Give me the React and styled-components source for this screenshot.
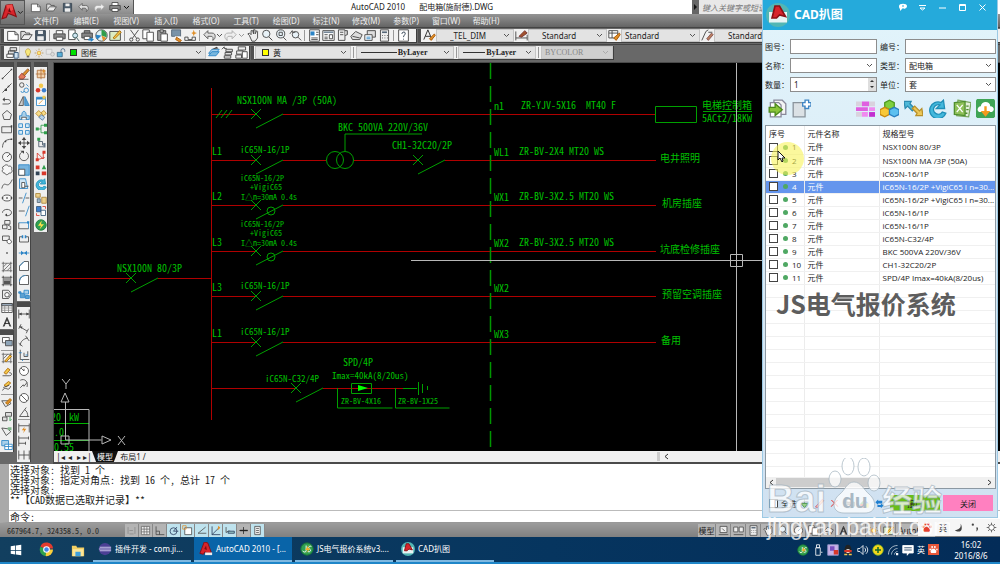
import React, { useState } from 'react';
import styled, { createGlobalStyle } from 'styled-components';

const GlobalStyle = createGlobalStyle`
  * {
    box-sizing: border-box;
  }
  body {
    margin: 0;
    font-family: 'Noto Sans', 'Noto Sans CJK SC', sans-serif;
    font-size: 8px;
    color: #222;
  }
  button,
  input,
  select {
    font: inherit;
    color: inherit;
    margin: 0;
    padding: 0;
    border: 0;
    border-radius: 0;
    background: none;
  }
`;

/* ---------- icons ---------- */

const K = '#444';
const B = '#2b84c6';
const L = '#a9d0ea';
const O = '#e0902a';
const G = '#2f9e4b';
const R = '#d8372a';
const Y = '#f3c84b';
const N = 'none';

// every shape is [path, stroke, fill]
const icons = {
  new: [['M2 3h9l4 4v7H2z', K, '#fff'], ['M11 3v4h4', K, N]],
  open: [['M1 13V3h5l1 2h5v2', K, '#ddd'], ['M1 13l4-6h10l-4 6z', K, '#eee']],
  save: [['M2 2h12v12H2z', '#33404d', '#4c5c6b'], ['M5 2h6v4H5zM4 9h8v5H4z', N, '#eee']],
  undo: [['M1 7l5-5v3h5c3 0 4 2 4 4s-1 4-3 5c1-3 0-5-2-5H6v3z', '#555', '#ddd']],
  redo: [['M15 7l-5-5v3H5C2 5 1 7 1 9s1 4 3 5c-1-3 0-5 2-5h4v3z', '#aaa', '#eee']],
  print: [['M4 6V2h8v4', K, '#fff'], ['M1 6h14v6H1z', K, '#888'], ['M4 10h8v4H4z', K, '#fff']],
  preview: [['M2 1h8v12H2z', K, '#fff'], ['M7 8a3 3 0 1 0 6 0a3 3 0 1 0-6 0M12 11l3 4', '#355', '#cfe6f2']],
  publish: [['M4 5V2h7v3M1 5h13v6H1z', K, '#888'], ['M4 9h7v4H4z', K, '#fff'], ['M9 12h3v-2l4 3-4 3v-2H9z', N, B]],
  globe: [['M8 1a7 7 0 1 0 0 14a7 7 0 1 0 0-14', K, '#dff0f5'], ['M8 8V1a7 7 0 0 1 6 9z', N, G], ['M8 8L3 13a7 7 0 0 1-2-6z', N, B], ['M8 8l6 3-4 4z', N, O]],
  sheet: [['M1 3h13v11H1z', K, '#dcecc2'], ['M5 11l8-9 2 2-8 8z', '#a60', Y]],
  cut: [['M3 1l8 11M13 1L5 12', K, N], ['M2 13a2 2 0 1 0 4 0a2 2 0 1 0-4 0M10 13a2 2 0 1 0 4 0a2 2 0 1 0-4 0', K, N]],
  copy: [['M1 1h8v11H1z', K, '#fff'], ['M6 4h8v11H6z', K, '#fff']],
  paste: [['M2 2h10v12H2z', K, '#999'], ['M6 6h8v9H6z', K, '#fff'], ['M5 1h4v3H5z', K, '#ccc']],
  match: [['M2 1h11v8H2z', '#567', '#7a93a8'], ['M6 9h7v2H6z', N, '#fff'], ['M8 10l6 4-2 2-5-3z', '#a50', O]],
  blockEdit: [['M1 14v-4h4v3h5v-3h4v4z', K, N], ['M9 5l2-1 1-3 1 3 3 1-3 1-1 3-1-3z', N, O]],
  pan: [['M3 8l-2-2 2-1 2 2V2l2 0 1 4 0-5 2 0v5l2-4 1 1v8l-3 4H6z', K, '#eee']],
  zoom: [['M2 6a4 4 0 1 0 9 0a4 4 0 1 0-9 0', K, '#e8f2f8'], ['M10 10l4 4', '#333', N]],
  zoomWin: [['M2 6a5 5 0 1 0 10 0a5 5 0 1 0-10 0M10 10l4 4', K, '#e8f2f8'], ['M5 4h4v4H5z', K, N]],
  zoomPrev: [['M4 7a4 4 0 1 0 8 0a4 4 0 1 0-8 0M11 10l4 4', K, '#e8f2f8'], ['M1 6l3-4v2h4', K, N]],
  props: [['M2 1h12v14H2z', K, '#fff'], ['M3 3h5v5H3z', N, B], ['M10 4h3M10 7h3M4 11h8M4 13h8', K, N]],
  center: [['M1 2h14v12H1z', K, '#fff'], ['M2 3h12v2H2z', N, '#789'], ['M3 7h4M3 10h4M3 12h4M9 7h4v5H9z', K, N]],
  palette: [['M3 1h8v13H3z', K, '#eee'], ['M5 4h4M5 7h4', K, N], ['M11 2h3v5l-3 1', K, '#ccc']],
  setMgr: [['M1 9l6-6 8 4-3 6H3z', K, '#ddd'], ['M3 9l9 2', K, N]],
  markup: [['M4 2h10v8H4z', K, '#ddd'], ['M1 7h9v7H1z', K, '#fff'], ['M3 10h5M3 12h5', B, N]],
  calc: [['M3 1h10v14H3z', K, '#eee'], ['M5 3h6v2H5z', N, '#567'], ['M5 8h1M8 8h1M11 8h1M5 11h1M8 11h1M11 11h1', K, N]],
  help: [['M2 1h12v14H2z', K, '#fff'], ['M6 6c0-3 5-3 4 0c0 1-2 2-2 4M8 12v1', '#234', N]],
  textStyle: [['M1 13L6 1l5 12M3 9h6', '#222', N], ['M8 12l6-6 1 2-5 6z', '#a50', O]],
  dimStyle: [['M1 3v11M15 7v7M1 11h14', K, N], ['M5 9l7-7 3 3-7 5z', '#733', '#a0522d']],
  tableStyle: [['M1 2h11v9H1zM1 5h11M5 2v9', K, '#fff'], ['M7 11l7-6 1 2-5 7z', '#a50', O]],
  leader: [['M1 14L6 3l3-2M9 4h5', K, N], ['M7 12l6-7 2 2-6 7z', '#855', '#b97f5f']],
  layers: [['M5 2h8v4H5zM3 6h8v4H3z', K, '#ddd'], ['M1 10h8v4H1z', K, '#fff'], ['M10 8h5v7h-5z', '#357', '#cfe2f0']],
  layerCur: [['M2 9l4-5h9l-4 5z', B, L], ['M2 12l4-5h9l-4 5z', B, '#78b6dd'], ['M6 4l6-3 2 2z', N, K]],
  layerPrev: [['M6 4h8v3H6zM5 8h8v3H5zM4 12h8v3H4z', K, '#ddd'], ['M1 4l3-3v2h3', K, N]],
  layerState: [['M4 1h9v4H4zM2 6h8v4H2zM1 11h7v4H1z', K, '#eee'], ['M9 7h6v8H9z', K, '#fff']],
  bulb: [['M8 1a5 5 0 0 0-3 8l1 3h4l1-3a5 5 0 0 0-3-8z', '#b89a3a', '#f8e87c'], ['M6 13h4v2H6z', N, '#555']],
  sun: [['M5 8a3 3 0 1 0 6 0a3 3 0 1 0-6 0', O, '#f8e87c'], ['M8 1v2M8 13v2M1 8h2M13 8h2M3 3l1 1M12 12l1 1M3 13l1-1M12 4l1-1', '#a08030', N]],
  freeze: [['M2 2h9v8H2z', '#bbb', '#e8e8e8'], ['M9 10a3 3 0 1 0 6 0a3 3 0 1 0-6 0', '#aaa', '#ddd']],
  lock: [['M2 7h8v7H2z', '#257', '#5ab0d8'], ['M8 7V4a3 3 0 0 1 6 0v2', '#357', N]],
  line: [['M2 14L14 2', K, N], ['M1 13h2v2H1zM13 1h2v2h-2z', N, K]],
  xline: [['M2 14L14 2', K, N], ['M5 9h3v3H5zM9 5h2v2H9z', N, K]],
  pline: [['M2 12h7c5 0 5-6 0-6H4', K, N], ['M2 6l3-3v6z', N, K]],
  polygon: [['M8 2l6 5-2 7H4L2 7z', K, '#eee']],
  rect: [['M1 5h13v8H1z', K, '#eee'], ['M13 3h2v3h-2z', N, K]],
  arc: [['M2 14C2 7 6 3 14 3', K, N], ['M5 5h2v2H5zM13 2h2v2h-2z', N, K]],
  circle: [['M2 8a6 6 0 1 0 12 0a6 6 0 1 0-12 0M8 8l4-4', K, '#f6f6f6']],
  cloud: [['M4 3c2-3 5-2 6 0c4-1 5 2 4 4c2 2 0 6-3 5c-2 3-5 3-6 0c-4 0-4-4-2-5c-2-2-1-4 1-4', K, '#f6f6f6']],
  spline: [['M1 14C5 0 8 18 15 2', K, N]],
  ellipse: [['M2 8a6 4 0 1 0 12 0a6 4 0 1 0-12 0', K, '#f6f6f6'], ['M1 7h2v2H1zM7 7h2v2H7zM13 7h2v2h-2z', N, K]],
  ellArc: [['M2 9c0-6 12-6 12 0c0 3-4 4-6 4', K, N], ['M8 10v4l-3-2z', N, K]],
  insert: [['M5 2h7v5H5zM2 8h6v5H2z', K, '#eee'], ['M9 8l4 2v4H9', K, N]],
  block: [['M2 4h9v6H2z', K, '#eee'], ['M9 9a3 3 0 1 0 5 2L11 8z', K, '#fff']],
  point: [['M7 7h2v2H7z', N, K]],
  hatch: [['M3 1v14M13 1v14M1 3h14M1 13h14M3 8l5-5M3 13L13 3M8 13l5-5', '#666', N]],
  gradient: [['M3 1v14M13 1v14M1 3h14M1 13h14', K, N], ['M4 4h8v8H4z', N, '#999'], ['M4 8h8v4H4z', N, '#555']],
  region: [['M2 3h8l4 5-4 6H2z', K, '#eee'], ['M5 9a3 3 0 1 0 6 0a3 3 0 1 0-6 0', K, '#fff']],
  table: [['M1 2h14v12H1z', K, '#fff'], ['M1 2h14v3H1z', K, '#9ab'], ['M1 8h14M1 11h14M5 5v9M10 5v9', '#888', N]],
  mtext: [['M3 14L8 2l5 12M5 10h6', '#222', N], ['M4 14L8 4l4 10', '#222', N]],
  order: [['M2 2h9v7H2z', K, '#fff'], ['M6 6h9v7H6z', K, '#8fa5b8']],
  editHatch: [['M3 1v14M13 1v14M1 3h14M1 13h14M3 9l6-6', '#666', N], ['M5 12l7-8 2 2-7 7z', '#a60', Y]],
  editPline: [['M2 13h9c5 0 3-5 0-4', K, N], ['M4 9l5-6 3 2-5 6z', '#a60', Y]],
  editSpline: [['M2 14c4-8 8 4 11-6', K, N], ['M4 7l6-5 3 2-6 5z', '#a60', Y], ['M3 10l8-3', K, N]],
  attr: [['M1 5l5 8 7-4-2-4z', K, '#eee'], ['M6 8l6-6 2 2-5 6z', '#a60', O]],
  sync: [['M6 2h8v5H6zM2 8h6v5H2z', K, '#ddd'], ['M12 8v5l2-2', G, N]],
  extract: [['M1 4l6 10 6-5-4-4z', K, '#eee'], ['M9 3h5v4H9z', N, '#7fb68a']],
  dataLink: [['M1 2h9v7H1z', B, L], ['M5 7h10v7H5zM5 10h10M10 7v7', B, '#fff']],
  erase: [['M1 12l4-5 5 4-3 4H3z', '#a33', '#e27a5a'], ['M6 8l7-7 2 2-6 7z', '#853', O], ['M1 15h13', K, N]],
  copyObj: [['M2 4a3 3 0 1 0 6 0a3 3 0 1 0-6 0', K, N], ['M8 11a3 3 0 1 0 6 0a3 3 0 1 0-6 0M4 12a2 2 0 1 0 4 0M11 3l3 3', B, N]],
  mirror: [['M7 2v12H1z', K, '#ccc'], ['M9 2v12h6z', B, '#5d9fcf']],
  offset: [['M2 14V9h3c0-8 6-8 6 0h4v5z', B, L], ['M5 14v-3h6v3', K, '#fff']],
  array: [['M1 1h5v5H1zM10 1h5v5h-5zM1 10h5v5H1zM10 10h5v5h-5z', B, '#d5eaf6']],
  move: [['M8 1v14M1 8h14', K, N], ['M8 0l3 4H5zM8 16l3-4H5zM0 8l4-3v6zM16 8l-4-3v6z', N, K]],
  rotate: [['M5 3a6 6 0 1 0 6 0', K, N], ['M3 1h5v4z', N, K]],
  scale: [['M1 1h14v14H1z', B, '#78b4de'], ['M1 7h8v8H1z', K, '#fff']],
  stretch: [['M2 1h8l3 13H2z', B, '#cfe6f5'], ['M5 6h4v7H5z', K, '#fff'], ['M9 11h5', K, N]],
  trim: [['M1 8h5M10 8h5', K, N], ['M11 1L6 15', B, N]],
  extend: [['M1 8h8', K, N], ['M15 1L10 15', B, N]],
  breakPt: [['M1 5h13v8', B, N], ['M1 5v8h13', K, N], ['M12 3h3v3h-3z', N, B]],
  breakObj: [['M2 12V5h4M10 5h4v7H2', K, N], ['M5 3h2v4H5zM9 3h2v4H9z', N, B]],
  join: [['M1 8h14', B, N], ['M4 5l4 3-4 3zM12 5L8 8l4 3z', N, B]],
  chamfer: [['M2 14V8l6-6h6v12z', K, '#fff'], ['M2 8l6-6', B, N]],
  fillet: [['M2 14V10c0-5 4-8 8-8h4v12z', K, '#fff'], ['M2 10c0-5 4-8 8-8', B, N]],
  explode: [['M3 7h6v6H3z', B, '#5d9fcf'], ['M8 3h6v5H8z', B, L], ['M10 10h5v4h-5zM1 5h3v2H1z', B, '#5d9fcf']],
  dimLin: [['M1 2v12M15 2v12M1 8h14', K, N], ['M1 8l4-2v4zM15 8l-4-2v4z', N, K]],
  dimAlign: [['M2 6l10 6M1 9l3-6M11 15l3-6', K, N], ['M2 6l4 0-1 3z', N, K]],
  dimArc: [['M3 14c0-5 4-9 10-10M1 11l5 4M10 1l5 7', K, N]],
  dimOrd: [['M3 1v13h12M8 5v5h5V3', K, N], ['M1 5h4M6 14v2M10 8h3', B, N]],
  dimRad: [['M2 8a6 6 0 1 0 12 0a6 6 0 1 0-12 0', K, '#fff'], ['M8 8L4 4M8 8V5', K, N]],
  dimJog: [['M3 3c6-3 11 2 9 9M3 13l4-4 1 2 4-5', K, N]],
  dimDia: [['M2 8a6 6 0 1 0 12 0a6 6 0 1 0-12 0M4 4l8 8', K, '#fff']],
  dimAng: [['M11 2L2 14h13M9 5c3 2 4 5 4 9', K, N]],
  dimQuick: [['M1 2v12M15 2v12M1 5h14', K, N], ['M9 6l-4 5h3l-1 4 4-6H8z', N, O]],
  dimBase: [['M1 1v14M1 4h13M1 11h9M14 2v4M10 9v4', K, N]],
  dimCont: [['M1 2v12M8 2v12M15 2v12M1 8h14', K, N]],
  p1: [['M3 3h10v10H3zM8 1v14M1 8h14', '#b0703a', '#f3d4b0'], ['M11 1l1 2 3 1-3 1-1 2-1-2z', N, O]],
  p2: [['M5 5a3 3 0 1 0 6 0a3 3 0 1 0-6 0', N, Y], ['M1 11a3 3 0 1 0 6 0a3 3 0 1 0-6 0', N, R], ['M9 11a3 3 0 1 0 6 0a3 3 0 1 0-6 0', N, '#3b7fd0']],
  p3: [['M2 3h12v11H2z', B, '#fff'], ['M2 3h12v3H2z', N, B], ['M5 12l5-5', O, N], ['M10 1h4v4h-4z', N, Y]],
  p4: [['M1 6l4-4 4 4-4 4zM8 5l4-3 3 4-4 3z', '#b98a2a', '#f7dc8a'], ['M5 11l4-3 4 3-3 4z', '#579', '#b9d4ea']],
  p5: [['M3 8h5M8 3v10M8 3h5M8 13h5', G, N], ['M1 6h4v4H1zM12 1h4v4h-4zM12 11h4v4h-4z', N, G]],
  p6: [['M5 3v10h6M5 6h5v5', '#456', N], ['M3 1h4v4H3z', N, G], ['M11 8h3v6h-3z', N, '#678']],
  p7: [['M3 13V4l8 8V3M3 13l10-3', R, N], ['M1 11h4v4H1zM10 1h4v4h-4z', N, R]],
  p8: [['M1 2h5v5H1z', N, R], ['M9 7l3-6 3 6z', N, G], ['M1 10h5v5H1z', N, '#345'], ['M9 10h6v5H9z', N, R]],
  refresh: [['M13 1l1 7H7l3-3a4 4 0 1 0 2 6l3 1A7 7 0 1 1 11 3z', '#1f8fb8', '#43b8dc']],
  p10: [['M1 2h6v5H1zM9 7h6v8H9z', '#a98238', '#ecd08b'], ['M3 9h4v5H3z', '#567', '#9fb8c9']],
  p11: [['M2 2h6v7H2z', '#357', '#3b7fd0'], ['M8 7h6v7H8z', '#357', '#fff'], ['M10 2h4v3M2 11v3h4', R, N]],
  bolt: [['M1 8a7 7 0 1 0 14 0a7 7 0 1 0-14 0', '#1c7a35', '#2fa052'], ['M9 2L4 9h4l-2 5 6-7H8z', N, '#ffe04a']],
  jsApp: [['M1 8a7 7 0 1 0 14 0a7 7 0 1 0-14 0', '#1c7a35', '#2fa052'], ['M7 4v6c0 2-3 2-4 0', '#fff', N], ['M13 5c-3-1-4 2-2 3s1 4-2 3', '#fff', N], ['M10 3L6 9h3l-2 4 5-6H9z', N, '#f8b02a']],
  snap: [['M3 3v10M13 3v10M5 13h6M5 8h5', '#888', N]],
  grid: [['M2 2h12v12H2zM6 2v12M10 2v12M2 6h12M2 10h12', '#666', '#eee']],
  ortho: [['M3 2v12h12M3 9h5v5', K, N]],
  polar: [['M3 9a5 5 0 1 0 10 0a5 5 0 1 0-10 0M8 9h7M8 9l5-6', '#235', N]],
  osnap: [['M4 4h10v10H4z', K, '#fff'], ['M1 1h5v5H1z', O, N]],
  otrack: [['M14 3L3 12h12', K, N]],
  ducs: [['M3 2v12h12M3 14L13 4', '#235', N], ['M12 1l3 3-4 4z', N, O]],
  dyn: [['M3 3v8l3-2h3', K, N], ['M6 9h9v3H6z', '#235', '#9cc']],
  lwt: [['M8 3v10M2 8h12', '#222', N], ['M3 7h11v2H3z', N, '#222']],
  qp: [['M4 2h8v12H4zM6 5h4M6 8h4M6 11h4', K, '#eee']],
  pageA: [['M3 2h10v9H3zM1 14h14', K, '#eee'], ['M6 5l4 4', K, N]],
  pageB: [['M1 3h6v7H1zM9 3h6v7H9zM1 14h14', K, '#eee']],
  pencil: [['M2 13L12 2l2 2L5 14z', '#b58', '#f3c08a']],
  del: [['M3 3l10 10M13 3L3 13', '#e25858', N], ['M4 3l9 9M12 3L3 12', '#e25858', N]],
  color: [['M2 8l6-6v12H2z', N, '#4aa84e'], ['M8 2l6 6H8z', N, '#2f76c8'], ['M8 8h6v6H8z', N, '#f0d23c'], ['M2 9h6v5H2z', N, R]],
  swap: [['M2 6l4-4v2h6v4H6v2z', N, '#1f7fd0'], ['M14 11l-4 4v-2H5v-3h5V8z', N, '#1f7fd0']],
  down: [['M8 2v6H3l5 6 5-6H8', '#3a8a3a', '#9ad08a']],
  gear: [['M4 8a4 4 0 1 0 8 0a4 4 0 1 0-8 0', K, '#fff'], ['M8 1v3M8 12v3M1 8h3M12 8h3M3 3l2 2M11 11l2 2M3 13l2-2M11 5l2-2', K, N]],
  moon: [['M12 1c2 6-3 10-9 10c4 5 12 3 11-4c0-3-1-5-2-6z', N, K]],
  comma: [['M3 3a2 2 0 1 0 4 0a2 2 0 1 0-4 0', N, K], ['M11 8h3c1 4-1 6-3 7c1-2 1-4 0-7', N, K]],
  paw: [['M8 7c2 0 6 4 5 6s-3 1-5 1-4 1-5-1 3-6 5-6z', N, '#e4402f'], ['M1 7a2 2 0 1 0 4 0a2 2 0 1 0-4 0M4 3a2 2 0 1 0 4 0a2 2 0 1 0-4 0M9 3a2 2 0 1 0 4 0a2 2 0 1 0-4 0M12 7a2 2 0 1 0 4 0a2 2 0 1 0-4 0', N, '#e4402f']],
  pawTile: [['M0 0h16v16H0z', N, '#e8583a'], ['M8 7c2 0 5 3 4 5s-2 1-4 1-3 1-4-1 2-5 4-5z', N, '#fff'], ['M2 7h3v2H2zM5 3h2v3H5zM9 3h2v3H9zM12 7h2v2h-2z', N, '#fff']],
  usb: [['M5 5h6v10H5zM6 1h4v4H6z', '#fff', N], ['M12 11h2', '#fff', N]],
  shot: [['M1 1h14v14H1z', '#99c', '#c9b2e8'], ['M4 3h6v6H4z', N, '#7a4fc0'], ['M9 8h6v6H9z', N, R]],
  qq: [['M8 1c-4 0-4 5-5 8l2 4h6l2-4c-1-3-1-8-5-8z', N, '#222'], ['M6 7h4v5H6z', N, '#fff'], ['M3 8h10v3H3z', N, R], ['M3 13h4v2H3zM9 13h4v2H9z', N, Y]],
  sound: [['M1 6h3l4-4v12L4 10H1zM10 5c2 2 2 4 0 6M12 3c3 3 3 7 0 10', '#fff', N]],
  guard: [['M1 8a7 7 0 1 0 14 0a7 7 0 1 0-14 0', '#7fb526', '#f5d51c'], ['M7 4h2v3h3v2H9v3H7V9H4V7h3z', N, '#126a2a']],
  wifi: [['M2 14C2 7 7 2 14 2M6 14c0-4 4-8 8-8M10 14c0-2 2-4 4-4', '#c8d4de', N], ['M12 12h3v3h-3z', N, '#fff']],
  note: [['M1 2h14v10H9l-2 3v-3H1z', '#fff', '#fff'], ['M3 5h10M3 8h10', '#1a3a5c', N]],
  windows: [['M1 3l6-1v6H1zM8 2l7-1v7H8zM1 9h6v5l-6-1zM8 9h7v6l-7-1z', N, '#fff']],
  chrome: [['M8 8L1.500 5A7 7 0 0 1 15 7H8z', N, '#e33b2e'], ['M8 8l-1 7A7 7 0 0 1 1.500 5z', N, '#2fa24c'], ['M8 8h7a7 7 0 0 1-8 7z', N, '#fbd03b'], ['M5 8a3 3 0 1 0 6 0a3 3 0 1 0-6 0', '#fff', '#3f83ea']],
  folder: [['M1 3h5l1 2h8v10H1z', N, '#f3cf63'], ['M2 7h12v8H2z', N, '#fbe69a'], ['M5 10h6v5H5z', N, '#3fa0dc']],
  eclipse: [['M1 8a7 7 0 1 0 14 0a7 7 0 1 0-14 0', N, '#4a3f94'], ['M2 6h13M1 8h14M2 10h13', '#c9c5ea', N]],
  acad: [['M1 13L6 0l4 1 4 11-5 1-2-2-2 3z', '#8c0f14', '#d8242b'], ['M6 8l2-4 1 5z', N, '#7c0b10'], ['M7 12h8v3H7z', N, '#eee']],
  logo: [['M1 14L5 1l6-1 4 12-5-2-3-1-2 4z', '#8c0f14', '#d8242b'], ['M5 1l6-1 1 5-4 3z', N, '#ef4a48'], ['M7 7l1-4 2 5z', N, '#6f090d']],
  grab: [['M0 8a8 8 0 1 0 16 0a8 8 0 1 0-16 0', N, '#52b6b4'], ['M2 6h12v7H2z', N, '#e8f4f4'], ['M4 10L6 2l3 0 4 7-4-1-2 2z', '#8c0f14', '#d8242b']],
  grabFile: [['M5 1h7l3 3v9H5z', '#889', '#f4f4f4'], ['M2 3h7l2 2v10H2z', '#889', '#fff'], ['M1 7h5V4l6 5-6 5v-3H1z', '#4c8a1c', '#8ac43a']],
  addFile: [['M1 3h10v12H1z', '#8a949c', '#dbe1e5'], ['M9 3h2V1h3v2h2v3h-2v2h-3V6H9z', '#3d84c4', '#fff']],
  matrix: [['M0 2h5v4H0zM11 2h5v4h-5zM0 11h5v4H0z', N, '#d9d2de'], ['M5 2h6v4H5zM0 7h10v3H0z', N, '#e05fe0'], ['M11 7h5v3h-5zM5 11h5v4H5z', N, '#f08af0'], ['M11 11h5v4h-5z', N, '#c22fd0']],
  cubes: [['M4 3l4-2 4 2v4L8 9 4 7z', '#4f9a1f', '#7fd03f'], ['M0 9l4-2 4 2v4l-4 2-4-2z', '#c98a10', '#f8c838'], ['M8 9l4-2 4 2v4l-4 2-4-2z', '#2a7fc0', '#5cc0f0']],
  arrows: [['M0 2h6L5 4l4 4-2 2-4-4-2 2z', '#2a8ab0', '#4db8d8'], ['M16 14h-6l1-2-4-4 2-2 4 4 2-2z', '#b8902a', '#ecc858']],
  excel: [['M5 1l11 2-2 12-10-1z', '#7aa860', '#e4f0da'], ['M2 3l9-1v12l-9-1z', '#4f8f2f', '#8fc05a'], ['M4 5l5 6M9 5l-5 6', '#fff', N], ['M12 6h2M12 9h2M11 12h2', '#4f8f2f', N]],
  cloudDown: [['M1 0h14l1 1v14l-1 1H1l-1-1V1z', N, '#3fa556'], ['M4 11c-4 0-3-5 0-5c1-5 8-4 8 0c4 0 4 5 0 5z', N, '#fff'], ['M7 6h2v4h3l-4 5-4-5h3z', N, '#f39a1f']],
};

const Glyph = ({ name, size = 13 }) => (
  <svg width={size} height={size} viewBox="0 0 16 16" aria-hidden="true">
    {icons[name].map(([d, stroke, fill], index) => (
      <path key={index} d={d} stroke={stroke} fill={fill} strokeWidth="1.1" />
    ))}
  </svg>
);

/* ---------- AutoCAD window ---------- */

const Desktop = styled.div`
  position: relative;
  display: flex;
  flex-direction: column;
  height: 100vh;
  min-height: 480px;
  overflow: hidden;
  background: #686868;
`;

const CadWindow = styled.main`
  flex: 1;
  min-height: 0;
  display: flex;
  flex-direction: column;
`;

const TopBar = styled.header`
  display: flex;
  height: 27px;
  background: linear-gradient(#969696 50%, #646464);
`;

const AppButton = styled.button`
  width: 25px;
  height: 25px;
  display: flex;
  align-items: center;
  border: 1px solid #555;
  background: linear-gradient(#9b9b9b, #6f6f6f);
`;

const TopRows = styled.div`
  flex: 1;
  display: flex;
  flex-direction: column;
`;

const TitleRow = styled.div`
  display: flex;
  height: 14px;
  background: #fff;
`;

const QuickAccess = styled.div`
  display: flex;
  align-items: center;
  width: 109px;
  padding-left: 3px;
  gap: 1px;
  background: linear-gradient(#b8b8b8, #8b8b8b);
  border-right: 1px solid #555;
`;

const PlainButton = styled.button`
  display: flex;
  align-items: center;
  justify-content: center;
  width: ${props => props.$width || 14}px;
  height: 13px;
  flex: none;
`;

const Title = styled.h1`
  display: flex;
  gap: 14px;
  margin: 0;
  padding-left: 217px;
  font-size: 8px;
  line-height: 13px;
  font-weight: 400;
  white-space: nowrap;
`;

const Search = styled.div`
  display: flex;
  align-items: center;
  justify-content: space-between;
  width: 70px;
  margin: 0 238px 0 auto;
  background: #666;
  input {
    width: 63px;
    height: 14px;
    padding-left: 3px;
    background: #e8e8e8;
    font-style: italic;
  }
  input::placeholder {
    color: #777;
    opacity: 1;
  }
`;

const MenuBar = styled.nav`
  display: flex;
  flex: 1;
  padding-left: 1px;
`;

const MenuButton = styled.button`
  width: 40px;
  color: #eee;
  line-height: 13px;
  text-align: center;
`;

const ToolbarRow = styled.div`
  display: flex;
  align-items: center;
  height: 17px;
  border-top: 1px solid #444;
  white-space: nowrap;
`;

const Toolbar = styled.div`
  display: flex;
  align-items: center;
  flex: none;
  height: 14px;
  width: ${props => props.$width}px;
  padding-left: 1px;
  margin-left: 4px;
  background: #f1f1f1;
  border: solid #3e3e3e;
  border-width: 0 1px 1px 0;
  box-shadow: -3px 0 0 #505050;
`;

const Divider = styled.span`
  width: 1px;
  height: 11px;
  margin: 0 2px;
  background: #999;
`;

const Combo = styled.label`
  display: flex;
  align-items: center;
  flex: none;
  gap: 1px;
  width: ${props => props.$width}px;
  height: 13px;
  padding: 0 3px;
  background: ${props => (props.$off ? '#cfcfcf' : '#e3e3e3')};
  border: 1px solid #c4c4c4;
  color: ${props => (props.$off ? '#888' : '#222')};
  select {
    flex: 1;
    min-width: 0;
    appearance: none;
    padding-left: ${props => props.$indent || 0}px;
    font-family: ${props => (props.$serif ? "'Liberation Serif', serif" : 'inherit')};
    font-weight: ${props => (props.$bold ? 700 : 400)};
    opacity: 1;
  }
`;

const Swatch = styled.span`
  width: 7px;
  height: 7px;
  margin: 0 3px;
  border: 1px solid #333;
  background: ${props => props.$color};
`;

const Chevron = ({ color = '#555' }) => (
  <svg width="7" height="5" viewBox="0 0 7 5" aria-hidden="true">
    <path d="M1 1l2.500 2.500L6 1" fill="none" stroke={color} />
  </svg>
);

const ToolGroup = ({ items }) =>
  items.map((item, index) =>
    item === '|' ? (
      <Divider key={index} />
    ) : (
      <PlainButton key={index} aria-label={item}>
        <Glyph name={item} size={13} />
      </PlainButton>
    )
  );

const Workspace = styled.div`
  flex: 1;
  min-height: 0;
  display: flex;
  gap: 3px;
  padding-top: 1px;
`;

const Rail = styled.div`
  display: flex;
  flex-direction: column;
  gap: 1px;
  width: 14px;
  flex: none;
`;

const Palette = styled.div`
  display: flex;
  flex-direction: column;
  align-items: center;
  justify-content: space-around;
  height: ${props => props.$height}px;
  flex: none;
  background: #efefef;
  border-top: 5px solid #4a4a4a;
  border-right: 1px solid #444;
  button {
    height: 13px;
  }
`;

const PaletteRule = styled.span`
  width: 12px;
  height: 1px;
  background: #999;
`;

const Document = styled.section`
  flex: 1;
  min-width: 0;
  display: flex;
  flex-direction: column;
  margin-left: 2px;
  border: solid #4a4a4a;
  border-width: 1px 0 2px 1px;
`;

const Canvas = styled.div`
  flex: 1;
  min-height: 0;
  overflow: hidden;
  background: #000;
  svg {
    display: block;
  }
  text {
    font-family: 'Noto Sans Mono CJK SC', 'Noto Sans CJK SC', monospace;
    font-size: 10px;
    fill: #00c000;
  }
  .mid {
    font-size: 9px;
  }
  .small {
    font-size: 8px;
  }
`;

const TabStrip = styled.div`
  display: flex;
  align-items: center;
  height: 11px;
  padding-left: 2px;
  background: #f0f0f0;
`;

const TabButton = styled.button`
  width: ${props => props.$width}px;
  height: 11px;
  line-height: 11px;
  color: ${props => (props.$active ? '#fff' : '#222')};
  background: ${props => (props.$active ? '#111' : 'transparent')};
  clip-path: ${props => (props.$active ? 'polygon(0 0, 100% 0, 84% 100%, 16% 100%)' : 'none')};
`;

const ScrollLeft = styled.button`
  margin-left: 509px;
  padding-left: 4px;
  border-left: 3px solid #ccc;
  line-height: 9px;
`;

const CommandArea = styled.section`
  display: flex;
  height: 59px;
  background: #fff;
  border-left: 9px solid #a9a9a9;
  border-bottom: 1px solid #999;
  font-family: 'Noto Sans Mono CJK SC', 'Noto Sans CJK SC', monospace;
  font-size: 10px;
`;

const CommandLog = styled.div`
  flex: 1;
  display: flex;
  flex-direction: column;
  padding-top: 1px;
  line-height: 10px;
  p {
    margin: 0;
    padding-left: 1px;
    white-space: pre;
  }
  label {
    display: flex;
    height: 12px;
    margin-top: auto;
    padding-left: 1px;
    border-top: 1px solid #bbb;
    line-height: 11px;
  }
  input {
    flex: 1;
    height: 10px;
  }
`;

const StatusBar = styled.footer`
  display: flex;
  align-items: center;
  height: 14px;
  background: linear-gradient(#9c9c9c, #808080);
`;

const Coordinates = styled.span`
  width: 118px;
  margin-left: 7px;
  font-family: 'Noto Sans Mono CJK SC', monospace;
  white-space: nowrap;
`;

const StatusToggle = styled.button`
  display: flex;
  align-items: center;
  justify-content: center;
  width: ${props => props.$width || 13}px;
  height: 13px;
  && {
    background: ${props => (props.$on ? '#bfe3ee' : '#b4b4b4')};
    border-right: 1px solid #888;
  }
`;

const StatusRight = styled.div`
  display: flex;
  margin-left: 433px;
`;

/* ---------- drawing ---------- */

const Switch = ({ x, y, fuse }) => (
  <g stroke="#00a000" fill="none">
    <path d={`M${x - 5} ${y - 5}l10 10M${x + 5} ${y - 5}l-10 10M${x} ${y + 14}l27-14`} />
    {fuse && <circle cx={x + 15} cy={y + 6} r="4" />}
  </g>
);

const feeders = [
  { y: 114, phase: '', label: 'NSX100N MA /3P (50A)', wire: 'n1', cable: 'ZR-YJV-5X16  MT40 F' },
  { y: 160, phase: 'L1', label: 'iC65N-16/1P', wire: 'WL1', cable: 'ZR-BV-2X4 MT20 WS', load: '电井照明', lx: 660 },
  { y: 205, phase: 'L2', vigi: true, wire: 'WX1', cable: 'ZR-BV-3X2.5 MT20 WS', load: '机房插座', lx: 662 },
  { y: 251, phase: 'L3', vigi: true, wire: 'WX2', cable: 'ZR-BV-3X2.5 MT20 WS', load: '坑底检修插座', lx: 660 },
  { y: 296, phase: 'L3', label: 'iC65N-16/1P', wire: 'WX2', load: '预留空调插座', lx: 662 },
  { y: 342, phase: 'L1', label: 'iC65N-16/1P', wire: 'WX3', load: '备用', lx: 661 },
];

const Drawing = () => (
  <svg width="1000" height="460">
    <g transform="translate(-54 -63)">
      <g stroke="#b00000" fill="none" shapeRendering="crispEdges">
        <path d="M211.500 88V420M54 278.500h77M158 278.500h53M211 388.500h86M323 388.500h80" />
        {feeders.map(({ y }) => (
          <path key={y} d={`M211 ${y}.500h45M283 ${y}.500h${y === 160 ? 43 : 373}`} />
        ))}
        <path d="M354 160.500h64M445 160.500h211" />
      </g>
      <path d="M490.500 63V452" stroke="#009600" strokeWidth="1.500" strokeDasharray="16 7 16 7" fill="none" />

      {feeders.map(({ y, phase, label, vigi, wire, cable, load, lx }) => (
        <g key={y}>
          <Switch x={256} y={y} fuse={vigi} />
          <text x="212" y={y - 5}>{phase}</text>
          {label && (
            <text className={y === 114 ? '' : 'mid'} x={y === 114 ? 237 : 240} y={y === 114 ? 104 : y - 7}>
              {label}
            </text>
          )}
          {vigi && (
            <g>
              <text className="small" x="240" y={y - 24}>iC65N-16/2P</text>
              <text className="small" x="250" y={y - 15}>+VigiC65</text>
              <text className="small" x="241" y={y - 5}>I△n=30mA 0.4s</text>
            </g>
          )}
          <text x="494" y={y - 4}>{wire}</text>
          {cable && <text x={y === 114 ? 521 : 519} y={y - 5} xmlSpace="preserve">{cable}</text>}
          {load && <text x={lx} y={y + 2}>{load}</text>}
        </g>
      ))}

      <g stroke="#00a000" fill="none">
        <path d="M216 118l6-8M221 118l6-8M226 118l6-8" />
        <path d="M345 151V134h77" />
        <circle cx="335" cy="160" r="8.500" />
        <circle cx="345" cy="160" r="8.500" />
        <path d="M655.500 106.500h41v16h-41zM703 111.500h49" />
        <path d="M337.500 388v20h55M395.500 388v20h54M351.500 383.500h20v10h-20zM403 388.500h14M418.500 382v13M422.500 384v9M427.500 386v4" />
      </g>
      <path d="M358 385l10 3-10 3z" fill="#0f0" />
      <text x="338" y="131">BKC 500VA 220V/36V</text>
      <text x="392" y="149">CH1-32C20/2P</text>
      <Switch x={418} y={160} />
      <text x="702" y="109">电梯控制箱</text>
      <text x="702" y="122">5ACt2/18KW</text>

      <text x="117" y="272">NSX100N 80/3P</text>
      <Switch x={131} y={278} />
      <text className="mid" x="265" y="382">iC65N-C32/4P</text>
      <Switch x={296} y={388} />
      <text x="343" y="366">SPD/4P</text>
      <text className="mid" x="332" y="379">Imax=40kA(8/20us)</text>
      <text className="small" x="341" y="404">ZR-BV-4X16</text>
      <text className="small" x="398" y="404">ZR-BV-1X25</text>

      <text x="51" y="421">20</text>
      <text x="69" y="421">kW</text>
      <text x="54" y="436">.0</text>
      <text x="54" y="451">0.55</text>
      <path d="M54 423.500h35M54 440.500h35" stroke="#00b400" />
      <g stroke="#b8b8b8" fill="none">
        <path d="M54 409.500h35V452M65.500 402v38h36" />
        <path d="M61 402h8l-4-9zM102 436v8l9-4zM61 436h8v8h-8z" />
        <path d="M62 379l4 5 4-5M66 384v5M118 436l7 9M125 436l-7 9" />
        <path d="M736.500 63V452M411 260.500h360M730.500 254.500h12v12h-12z" />
      </g>
    </g>
  </svg>
);

/* ---------- component window ---------- */

const GrabWindow = styled.aside`
  position: absolute;
  top: 0;
  right: 2px;
  width: 236px;
  height: 518px;
  display: flex;
  flex-direction: column;
  background: linear-gradient(#e2f4fb, #d0e1f1);
  border: solid #9cc9e4;
  border-width: 0 1px 1px 1px;
`;

const GrabHeader = styled.header`
  display: flex;
  align-items: center;
  height: 30px;
  padding: 0 3px;
  gap: 4px;
  background: #25aadb;
  color: #fff;
  h2 {
    flex: 1;
    margin: 0;
    font-size: 12px;
    line-height: 16px;
    font-weight: 700;
  }
`;

const WindowButtons = styled.div`
  display: flex;
  align-self: flex-start;
  padding: 1px 5px 0 0;
  gap: 6px;
`;

const GrabForm = styled.form`
  display: grid;
  grid-template-columns: 25px 87px 28px minmax(0, 1fr);
  grid-auto-rows: 15px;
  row-gap: 4px;
  align-items: center;
  padding: 9px 1px 0 2px;
  label {
    white-space: nowrap;
    overflow: hidden;
  }
  label[for='code'],
  label[for='kind'],
  label[for='unit'] {
    padding-left: 3px;
  }
`;

const Field = styled.span`
  display: flex;
  align-items: center;
  min-width: 0;
  height: 15px;
  padding-right: 3px;
  background: #fff;
  border: 1px solid #8d8d8d;
  input,
  select {
    flex: 1;
    min-width: 0;
    height: 12px;
    padding-left: 3px;
    appearance: none;
  }
`;

const Spinner = styled.button`
  && {
    display: flex;
    padding: 1px;
    height: 13px;
    margin-right: -3px;
    background: #dedede;
  }
`;

const ActionRow = styled.div`
  display: flex;
  align-items: center;
  height: 33px;
  padding: 0 0 0 2px;
  button {
    display: flex;
    align-items: center;
    justify-content: center;
    width: 24px;
    height: 24px;
  }
  button:nth-child(3) {
    margin-left: auto;
  }
`;

const ListFrame = styled.div`
  flex: 1;
  min-height: 0;
  display: flex;
  flex-direction: column;
  margin: 0 1px 0 2px;
  background: #fff;
  border: 1px solid #8b98a2;
`;

const ListBody = styled.div`
  position: relative;
  flex: 1;
  min-height: 0;
  overflow: hidden;
`;

const PartTable = styled.table`
  width: 100%;
  table-layout: fixed;
  border-collapse: collapse;
  font-family: 'Open Sans', 'Noto Sans CJK SC', sans-serif;
  th,
  td {
    height: 13px;
    padding: 0 0 0 3px;
    line-height: 12px;
    text-align: left;
    font-weight: 400;
    white-space: nowrap;
    border-right: 1px solid #ececec;
    border-bottom: 1px solid #f0f0f0;
  }
  th:last-child,
  td:last-child {
    border-right: 0;
  }
  th {
    height: 15px;
    border-bottom: 0;
  }
`;

const PartRow = styled.tr`
  background: ${props => (props.$selected ? '#6495ed' : 'transparent')};
  color: ${props => (props.$selected ? '#fff' : '#222')};
`;

const IndexCell = styled.div`
  display: flex;
  align-items: center;
  height: 12px;
`;

const TickBox = styled.input`
  appearance: none;
  width: 9px;
  height: 9px;
  flex: none;
  && {
    border: 1px solid #444;
    background: #fff;
  }
  &:checked {
    box-shadow: inset 0 0 0 1px #fff, inset 0 0 0 4px #357;
  }
`;

const Dot = styled.span`
  width: 5px;
  height: 5px;
  margin: 0 4px 0 5px;
  border-radius: 50%;
  background: #4fa863;
`;

const Spotlight = styled.div`
  position: absolute;
  left: 5px;
  top: 16px;
  width: 33px;
  height: 33px;
  border-radius: 50%;
  background: rgba(248, 244, 90, 0.6);
`;

const Pointer = styled.svg`
  position: absolute;
  left: 11px;
  top: 24px;
`;

const Caption = styled.div`
  position: absolute;
  left: 10px;
  top: 160px;
  font-size: 25px;
  line-height: 34px;
  font-weight: 700;
  font-family: 'Noto Sans CJK SC', sans-serif;
  color: #5d5d5d;
  white-space: nowrap;
`;

const ScrollTrack = styled.div`
  display: flex;
  align-items: center;
  justify-content: space-between;
  height: 11px;
  padding: 0 3px;
  background: #f0f0f0;
`;

const ScrollThumb = styled.span`
  width: 104px;
  height: 9px;
  margin-right: 106px;
  background: #cdcdcd;
`;

const GrabFooter = styled.footer`
  display: flex;
  align-items: center;
  height: 28px;
  padding: 0 1px 0 6px;
  label {
    display: flex;
    align-items: center;
    gap: 3px;
    width: 28px;
    white-space: nowrap;
  }
`;

const FooterButton = styled.button`
  width: 50px;
  height: 16px;
  margin-left: 3px;
  && {
    background: ${props => props.$color};
  }
`;

/* ---------- taskbar ---------- */

const TaskBar = styled.footer`
  display: flex;
  height: 27px;
  color: #fff;
  background: linear-gradient(90deg, #123f5f, #06355f 55%, #032c58);
  border-bottom: 2px solid #1f86c8;
`;

const Launcher = styled.button`
  display: flex;
  align-items: center;
  justify-content: center;
  width: 31px;
`;

const Task = styled.button`
  display: flex;
  align-items: center;
  gap: 3px;
  width: 98px;
  margin-right: 3px;
  padding-left: 5px;
  white-space: nowrap;
  && {
    background: ${props => (props.$active ? '#0964a8' : 'transparent')};
    border-bottom: 2px solid #7fb8e0;
  }
`;

const Tray = styled.div`
  display: flex;
  align-items: center;
  gap: 3px;
  margin-left: auto;
`;

const Clock = styled.time`
  width: 58px;
  line-height: 11px;
  text-align: center;
`;

const InputBar = styled.div`
  position: absolute;
  right: 0;
  bottom: 28px;
  display: flex;
  align-items: center;
  justify-content: space-around;
  width: 82px;
  height: 17px;
  background: #f6f6f6;
`;

const Watermark = styled.svg`
  position: absolute;
  right: 50px;
  bottom: 18px;
  pointer-events: none;
  text {
    font-family: 'Liberation Sans', 'Noto Sans CJK SC', sans-serif;
  }
`;

const menus = ['文件(F)', '编辑(E)', '视图(V)', '插入(I)', '格式(O)', '工具(T)', '绘图(D)', '标注(N)', '修改(M)', '参数(P)', '窗口(W)', '帮助(H)'];
const standardTools = ['new', 'open', 'save', '|', 'print', 'preview', 'publish', 'globe', 'sheet', '|', 'cut', 'copy', 'paste', 'match', 'blockEdit', '|', 'undo'];
const viewTools = ['pan', 'zoom', 'zoomWin', 'zoomPrev', '|', 'props', 'center', 'palette', 'setMgr', 'markup', 'calc', '|', 'help'];
const drawTools = ['line', 'xline', 'pline', 'polygon', 'rect', 'arc', 'circle', 'cloud', 'spline', 'ellipse', 'ellArc', 'insert', 'block', 'point', 'hatch', 'gradient', 'region', 'table', 'mtext'];
const modifyTwo = ['order', '|', 'editHatch', 'editPline', 'editSpline', '|', 'attr', 'sync', 'extract', 'dataLink'];
const modifyTools = ['erase', 'copyObj', 'mirror', 'offset', 'array', 'move', 'rotate', 'scale', 'stretch', 'trim', 'extend', 'breakPt', 'breakObj', 'join', 'chamfer', 'fillet', 'explode'];
const dimTools = ['dimLin', 'dimAlign', 'dimArc', 'dimOrd', '|', 'dimRad', 'dimJog', 'dimDia', 'dimAng', '|', 'dimQuick', 'dimBase', 'dimCont'];
const pluginTools = ['p1', 'p2', 'p3', 'p4', 'p5', 'p6', 'p7', 'p8', 'refresh', 'p10', 'p11', 'bolt'];
const toggles = ['snap', 'grid', 'ortho', 'polar', 'osnap', 'otrack', 'ducs', 'dyn', 'lwt', 'qp'];
const activeToggles = ['polar', 'osnap', 'otrack', 'ducs', 'dyn', 'qp'];

const parts = [
  'NSX100N 80/3P',
  'NSX100N MA /3P (50A)',
  'iC65N-16/1P',
  'iC65N-16/2P +VigiC65 I n=30...',
  'iC65N-16/2P +VigiC65 I n=30...',
  'iC65N-16/1P',
  'iC65N-16/1P',
  'iC65N-C32/4P',
  'BKC 500VA 220V/36V',
  'CH1-32C20/2P',
  'SPD/4P Imax=40kA(8/20us)',
];

const PaletteBox = ({ height, items }) => (
  <Palette $height={height}>
    {items.map((item, index) =>
      item === '|' ? (
        <PaletteRule key={index} />
      ) : (
        <PlainButton key={index} aria-label={item}>
          <Glyph name={item} size={12} />
        </PlainButton>
      )
    )}
  </Palette>
);

const StyleCombo = ({ label, value, ...rest }) => (
  <Combo {...rest}>
    <select aria-label={label} defaultValue={value}>
      <option>{value}</option>
    </select>
    <Chevron />
  </Combo>
);

const LineSample = ({ width }) => (
  <svg width={width} height="5" aria-hidden="true">
    <path d={`M1 2.500H${width}`} stroke="#333" />
  </svg>
);

const WindowIcon = ({ label, d }) => (
  <PlainButton aria-label={label}>
    <svg width="9" height="9" viewBox="0 0 9 9" fill="none" stroke="#fff">
      <path d={d} />
    </svg>
  </PlainButton>
);

const SideArrow = ({ left }) => (
  <svg width="5" height="7" viewBox="0 0 5 7" aria-hidden="true">
    <path d={left ? 'M4 1L1 3.500 4 6' : 'M1 1l3 2.500L1 6'} fill="none" stroke="#333" />
  </svg>
);

const PartsWindow = () => {
  const [selected, setSelected] = useState(3);

  return (
    <GrabWindow>
      <GrabHeader>
        <Glyph name="grab" size={24} />
        <h2>CAD扒图</h2>
        <WindowButtons>
          <PlainButton aria-label="消息">
            <svg width="9" height="9" viewBox="0 0 9 9">
              <path d="M1 3c0-3 8-3 8 0s-4 3-5 3L2 8V6C1 5 1 4 1 3z" fill="#fff" />
              <path d="M5 2v2M5 5v1" stroke="#25aadb" />
            </svg>
          </PlainButton>
          <WindowIcon label="菜单" d="M1 2.500h7M2 5h5L4.500 7z" />
          <WindowIcon label="最小化" d="M1 5h7" />
          <WindowIcon label="最大化" d="M1.500 1.500h6v6h-6zM1.500 2.500h6" />
          <WindowIcon label="关闭窗口" d="M1.500 1.500l6 6M7.500 1.500l-6 6" />
        </WindowButtons>
      </GrabHeader>

      <GrabForm onSubmit={(e) => e.preventDefault()}>
        <label htmlFor="drawing">图号：</label>
        <Field><input id="drawing" /></Field>
        <label htmlFor="code">编号：</label>
        <Field><input id="code" /></Field>
        <label htmlFor="name">名称：</label>
        <Field>
          <select id="name" />
          <Chevron />
        </Field>
        <label htmlFor="kind">类型：</label>
        <Field>
          <select id="kind"><option>配电箱</option></select>
          <Chevron />
        </Field>
        <label htmlFor="count">数量：</label>
        <Field>
          <input id="count" defaultValue="1" />
          <Spinner type="button" aria-label="调整数量">
            <svg width="6" height="10" viewBox="0 0 6 10">
              <path d="M1 3l2-2 2 2zM1 7l2 2 2-2z" fill="#333" />
            </svg>
          </Spinner>
        </Field>
        <label htmlFor="unit">单位：</label>
        <Field>
          <select id="unit"><option>套</option></select>
          <Chevron />
        </Field>
      </GrabForm>

      <ActionRow>
        {['grabFile', 'addFile', 'matrix', 'cubes', 'arrows', 'refresh', 'excel', 'cloudDown'].map((item) => (
          <button key={item} aria-label={item}>
            <Glyph name={item} size={19} />
          </button>
        ))}
      </ActionRow>

      <ListFrame>
        <ListBody>
          <PartTable>
            <colgroup>
              <col width="38" />
              <col width="75" />
              <col />
            </colgroup>
            <thead>
              <tr>
                <th>序号</th>
                <th>元件名称</th>
                <th>规格型号</th>
              </tr>
            </thead>
            <tbody>
              {parts.map((part, index) => (
                <PartRow key={index} $selected={index === selected} onClick={() => setSelected(index)}>
                  <td>
                    <IndexCell>
                      <TickBox type="checkbox" aria-label={`选择 ${index + 1}`} />
                      <Dot />
                      {index + 1}
                    </IndexCell>
                  </td>
                  <td>元件</td>
                  <td>{part}</td>
                </PartRow>
              ))}
              {Array.from({ length: 16 }, (_, index) => (
                <PartRow key={index}><td /><td /><td /></PartRow>
              ))}
            </tbody>
          </PartTable>
          <Spotlight />
          <Pointer width="8" height="13" viewBox="0 0 8 13">
            <path d="M1 1v9l2-2 2 4 1-1-1-3h3z" fill="#fff" stroke="#111" />
          </Pointer>
          <Caption>JS电气报价系统</Caption>
        </ListBody>
        <ScrollTrack>
          <SideArrow left />
          <ScrollThumb />
          <SideArrow />
        </ScrollTrack>
      </ListFrame>

      <GrabFooter>
        <label><TickBox type="checkbox" />全选</label>
        {['down', 'pencil', 'del', 'print', 'color', 'swap'].map((item) => (
          <PlainButton key={item} $width={15} aria-label={item}>
            <Glyph name={item} size={11} />
          </PlainButton>
        ))}
        <FooterButton $color="#68bd18">接口</FooterButton>
        <FooterButton $color="#ff80c0">关闭</FooterButton>
      </GrabFooter>
    </GrabWindow>
  );
};

const BrandMark = () => (
  <Watermark width="186" height="88" viewBox="764 458 186 88">
    <g fill="#fff" fillOpacity="0.75" stroke="#9fb0bc" strokeOpacity="0.7">
      <text x="767" y="512" fontSize="38" fontWeight="700">Bai</text>
      <ellipse cx="835" cy="479" rx="6" ry="8" />
      <ellipse cx="848" cy="466" rx="6" ry="9" />
      <ellipse cx="864" cy="467" rx="6" ry="9" />
      <ellipse cx="874" cy="483" rx="6" ry="8" />
      <path d="M854 482c7 0 10 8 15 12c9 8 7 19-4 19c-7 0-15 0-21 0c-12 0-13-12-4-19c5-4 7-12 14-12z" />
      <text x="882" y="511" fontSize="30" fontWeight="700">经验</text>
    </g>
    <text x="842" y="508" fontSize="21" fontWeight="700" fill="#a9b8c4">du</text>
    <text x="767" y="535" fontSize="23" fill="#fff" fillOpacity="0.8">jingyan.baidu.com</text>
  </Watermark>
);

const App = () => (
  <>
    <GlobalStyle />
    <Desktop>
      <CadWindow>
        <TopBar>
          <AppButton aria-label="AutoCAD">
            <Glyph name="logo" size={17} />
            <Chevron color="#222" />
          </AppButton>
          <TopRows>
            <TitleRow>
              <QuickAccess>
                {['new', 'open', 'save', 'undo', 'redo'].map((item) => (
                  <PlainButton key={item} $width={15} aria-label={item}>
                    <Glyph name={item} size={11} />
                  </PlainButton>
                ))}
                <PlainButton aria-label="print"><Glyph name="print" size={12} /></PlainButton>
                <Chevron color="#111" />
              </QuickAccess>
              <Title>
                <span>AutoCAD 2010</span>
                <span>配电箱(施耐德).DWG</span>
              </Title>
              <Search>
                <svg width="6" height="8" viewBox="0 0 6 8" aria-hidden="true">
                  <path d="M2 1l3 3-3 3z" fill="#111" />
                </svg>
                <input aria-label="搜索" placeholder="键入关键字或短语" />
              </Search>
            </TitleRow>
            <MenuBar>
              {menus.map((menu) => <MenuButton key={menu}>{menu}</MenuButton>)}
            </MenuBar>
          </TopRows>
        </TopBar>

        <ToolbarRow>
          <Toolbar $width={413}>
            <ToolGroup items={standardTools} />
            <PlainButton $width={7} aria-label="undo list"><Chevron /></PlainButton>
            <PlainButton aria-label="redo"><Glyph name="redo" /></PlainButton>
            <PlainButton $width={9} aria-label="redo list"><Chevron color="#999" /></PlainButton>
            <ToolGroup items={viewTools} />
          </Toolbar>
          <Toolbar $width={600}>
            <ToolGroup items={['textStyle']} />
            <StyleCombo label="文字样式" value="_TEL_DIM" $width={78} $indent={10} />
            <ToolGroup items={['dimStyle']} />
            <StyleCombo label="标注样式" value="Standard" $width={79} $indent={10} />
            <ToolGroup items={['tableStyle']} />
            <StyleCombo label="表格样式" value="Standard" $width={79} />
            <ToolGroup items={['leader']} />
            <StyleCombo label="引线样式" value="Standard" $width={90} $indent={10} />
          </Toolbar>
        </ToolbarRow>

        <ToolbarRow>
          <Toolbar $width={246}>
            <ToolGroup items={['layers']} />
            <Combo $width={187}>
              {['bulb', 'sun', 'freeze', 'lock'].map((item) => <Glyph key={item} name={item} size={10} />)}
              <Swatch $color="#00e000" />
              <select aria-label="图层"><option>图框</option></select>
              <Chevron />
            </Combo>
            <ToolGroup items={['layerCur', 'layerPrev', 'layerState']} />
          </Toolbar>
          <Toolbar $width={360}>
            <Combo $width={96}>
              <Swatch $color="#ffff00" />
              <select aria-label="颜色"><option>黄</option></select>
              <Chevron />
            </Combo>
            <Divider />
            <Combo $width={98} $serif $bold>
              <LineSample width={37} />
              <select aria-label="线型"><option>ByLayer</option></select>
              <Chevron />
            </Combo>
            <Divider />
            <Combo $width={78} $serif $bold>
              <LineSample width={23} />
              <select aria-label="线宽"><option>ByLayer</option></select>
              <Chevron />
            </Combo>
            <Divider />
            <Combo $width={72} $serif $off>
              <select aria-label="打印样式" disabled><option>BYCOLOR</option></select>
              <Chevron color="#aaa" />
            </Combo>
          </Toolbar>
        </ToolbarRow>

        <Workspace>
          <Rail>
            <PaletteBox height={267} items={drawTools} />
            <PaletteBox height={122} items={modifyTwo} />
          </Rail>
          <Rail>
            <PaletteBox height={239} items={modifyTools} />
            <PaletteBox height={160} items={dimTools} />
          </Rail>
          <Rail>
            <PaletteBox height={170} items={pluginTools} />
          </Rail>
          <Document>
            <Canvas><Drawing /></Canvas>
            <TabStrip>
              {['|◂', '◂', '▸', '▸|'].map((item) => (
                <TabButton key={item} $width={9}>{item}</TabButton>
              ))}
              <TabButton $active $width={26}>模型</TabButton>
              <TabButton $width={30}>布局1 /</TabButton>
              <ScrollLeft aria-label="向左滚动"><SideArrow left /></ScrollLeft>
            </TabStrip>
          </Document>
        </Workspace>

        <CommandArea>
          <CommandLog>
            <p>选择对象: 找到 1 个</p>
            <p>选择对象: 指定对角点: 找到 16 个, 总计 17 个</p>
            <p>选择对象:</p>
            <p>**【CAD数据已选取并记录】**</p>
            <label>
              命令:
              <input />
            </label>
          </CommandLog>
        </CommandArea>

        <StatusBar>
          <Coordinates>667964.7, 324358.5, 0.0</Coordinates>
          {toggles.map((item) => (
            <StatusToggle key={item} $on={activeToggles.includes(item)} $width={14} aria-label={item}>
              <Glyph name={item} size={11} />
            </StatusToggle>
          ))}
          <StatusRight>
            <StatusToggle $width={18}>模型</StatusToggle>
            {['pageA', 'pageB', 'calc', 'pan', 'zoom', 'circle', 'copy', 'setMgr', 'mtext', 'snap', 'sun', 'sheet'].map((item) => (
              <StatusToggle key={item} $width={15} aria-label={item}>
                <Glyph name={item} size={11} />
              </StatusToggle>
            ))}
            <StatusToggle $width={40}>AutoCAD</StatusToggle>
          </StatusRight>
        </StatusBar>
      </CadWindow>

      <TaskBar>
        <Launcher aria-label="开始"><Glyph name="windows" size={12} /></Launcher>
        <Launcher aria-label="Chrome"><Glyph name="chrome" size={15} /></Launcher>
        <Launcher aria-label="资源管理器"><Glyph name="folder" size={14} /></Launcher>
        <Task><Glyph name="eclipse" size={14} />插件开发 - com.ji...</Task>
        <Task $active><Glyph name="acad" size={14} />AutoCAD 2010 - [...</Task>
        <Task><Glyph name="jsApp" size={14} />JS电气报价系统v3....</Task>
        <Task><Glyph name="grab" size={14} />CAD扒图</Task>
        <Tray>
          {['jsApp', 'usb', 'shot', 'qq', 'sound', 'guard', 'wifi', 'note'].map((item) => (
            <Glyph key={item} name={item} size={12} />
          ))}
          <span>英</span>
          <Glyph name="pawTile" size={11} />
          <Clock>16:02<br />2016/8/6</Clock>
        </Tray>
      </TaskBar>

      <PartsWindow />
      <InputBar>
        <Glyph name="paw" size={11} />
        <span>英</span>
        <Glyph name="moon" size={10} />
        <Glyph name="comma" size={9} />
        <Glyph name="gear" size={11} />
      </InputBar>
      <BrandMark />
    </Desktop>
  </>
);

export default App;
